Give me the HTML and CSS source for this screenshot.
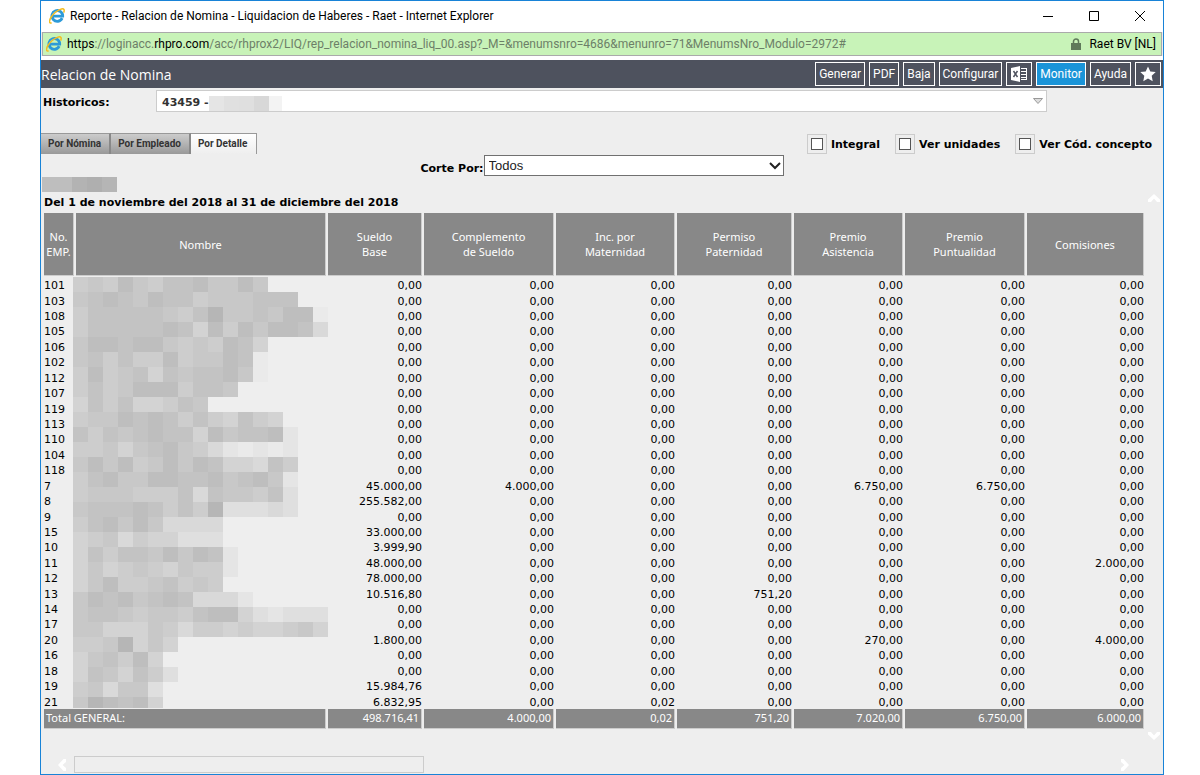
FILE: index.html
```html
<!DOCTYPE html>
<html lang="es">
<head>
<meta charset="utf-8">
<title>Reporte - Relacion de Nomina</title>
<link rel="stylesheet" href="styles.css">
</head>
<body>
<svg width="0" height="0" class="symbols" aria-hidden="true">
  <symbol id="ie" viewBox="0 0 16 16">
    <path d="M13.200 10.200A5.400 5.400 0 1 1 13.700 8.200H4.400" fill="none" stroke="#2c9ad8" stroke-width="2.800"/>
    <path d="M3.400 7.100a4.800 4.800 0 0 1 4.600-3.500" fill="none" stroke="#8ad6f7" stroke-width="1"/>
    <path d="M2.600 14.800C.2 15.800-.2 13 1.900 9.500 4.200 5.600 9 1.700 12.500.9c2.700-.6 3.300 1.200 2.100 3.700" fill="none" stroke="#f3bd22" stroke-width="1.500"/>
  </symbol>
  <symbol id="chevron" viewBox="0 0 12 8"><path d="M0 0h3l3 3.500L9 0h3v2.500L6 8 0 2.500z" fill="#fff"/></symbol>
</svg>
<div class="window">
  <header class="titlebar">
    <svg class="ie"><use href="#ie"/></svg>
    <span class="caption">Reporte - Relacion de Nomina - Liquidacion de Haberes - Raet - Internet Explorer</span>
    <button class="winbtn" aria-label="Minimizar"><svg width="10" height="10"><path d="M0 5.500h10" stroke="#000"/></svg></button>
    <button class="winbtn" aria-label="Maximizar"><svg width="10" height="10"><path d="M.5.5h9v9h-9z" stroke="#000" fill="none"/></svg></button>
    <button class="winbtn" aria-label="Cerrar"><svg width="10" height="10"><path d="M0 0l10 10M10 0L0 10" stroke="#000"/></svg></button>
  </header>
  <div class="address">
    <svg class="ie"><use href="#ie"/></svg>
    <span class="url"><b>https</b>://loginacc.<b>rhpro.com</b>/acc/rhprox2/LIQ/rep_relacion_nomina_liq_00.asp?_M=&amp;menumsnro=4686&amp;menunro=71&amp;MenumsNro_Modulo=2972#</span>
    <svg width="10" height="12"><path d="M0 5h10v7H0z" fill="#5f7a5a"/><path d="M2.500 5.500V3.500a2.500 2.500 0 0 1 5 0v2" fill="none" stroke="#5f7a5a" stroke-width="1.500"/></svg>
    <span class="owner">Raet BV [NL]</span>
  </div>
  <nav class="toolbar">
    <h1>Relacion de Nomina</h1>
    <button>Generar</button>
    <button>PDF</button>
    <button>Baja</button>
    <button>Configurar</button>
    <button class="icon" aria-label="Excel"><svg width="16" height="16"><path d="M0 2l9-2v16l-9-2z" fill="#fff"/><path d="M2.500 5l4 6M6.500 5l-4 6" stroke="#4e525e" stroke-width="1.500"/><path d="M10 2.500h6M10 5.500h6M10 8.500h6M10 11.500h6M10 13.500h6M15.500 2v12" stroke="#fff" fill="none"/></svg></button>
    <button class="active">Monitor</button>
    <button>Ayuda</button>
    <button class="icon" aria-label="Favorito"><svg width="16" height="16" viewBox="0 0 16 16"><path d="M8 .5l2.300 4.900 5.400.7-4 3.700 1 5.400L8 12.600l-4.700 2.600 1-5.400-4-3.700 5.400-.7z" fill="#fff"/></svg></button>
  </nav>
  <div class="history">
    <label for="hist">Historicos:</label>
    <button id="hist" class="combo"><span>43459 -</span><svg class="mask" width="73" height="15"><path d="M0 0h15v15H0z" fill="#e5e5e5"/><path d="M15 0h15v15H15z" fill="#e0e0e0"/><path d="M30 0h15v15H30z" fill="#dfdfdf"/><path d="M45 0h15v15H45z" fill="#d8d8d8"/><path d="M60 0h13v15H60z" fill="#f3f3f3"/></svg><svg class="arrow" width="10" height="6"><path d="M.5.5h9L5 5.500z" fill="#ddd" stroke="#999"/></svg></button>
  </div>
  <div class="options">
    <div class="tabs" role="tablist">
      <button role="tab">Por Nómina</button><button role="tab">Por Empleado</button><button role="tab" class="on" aria-selected="true">Por Detalle</button>
    </div>
    <div class="checks">
      <label><span class="box"><input type="checkbox"></span>Integral</label>
      <label><span class="box"><input type="checkbox"></span>Ver unidades</label>
      <label><span class="box"><input type="checkbox"></span>Ver Cód. concepto</label>
    </div>
  </div>
  <div class="cut">
    <label for="corte">Corte Por:</label>
    <div class="pick"><select id="corte"><option>Todos</option></select><svg width="12" height="8"><path d="M1 1l5 5 5-5" fill="none" stroke="#222" stroke-width="2"/></svg></div>
  </div>
  <main class="report">
    <div class="sheet">
      <svg class="company" width="75" height="15"><path d="M0 0h30v15H0z" fill="#bebebe"/><path d="M30 0h15v15H30z" fill="#b3b3b3"/><path d="M45 0h15v15H45z" fill="#afafaf"/><path d="M60 0h15v15H60z" fill="#b5b5b5"/></svg>
      <h2>Del 1 de noviembre del 2018 al 31 de diciembre del 2018</h2>
      <table>
        <colgroup><col class="c-num"><col class="c-name"><col class="c-base"><col class="c-comp"><col class="c-inc"><col class="c-perm"><col class="c-asis"><col class="c-punt"><col class="c-comi"></colgroup>
        <thead><tr><th>No.<br>EMP.</th><th>Nombre</th><th>Sueldo<br>Base</th><th>Complemento<br>de Sueldo</th><th>Inc. por<br>Maternidad</th><th>Permiso<br>Paternidad</th><th>Premio<br>Asistencia</th><th>Premio<br>Puntualidad</th><th>Comisiones</th></tr></thead>
        <tbody id="rows"></tbody>
        <tfoot><tr><th colspan="2">Total GENERAL:</th><td>498.716,41</td><td>4.000,00</td><td>0,02</td><td>751,20</td><td>7.020,00</td><td>6.750,00</td><td>6.000,00</td></tr></tfoot>
      </table>
    </div>
    <div class="rail">
      <button class="up" aria-label="Subir"><svg width="12" height="8"><use href="#chevron"/></svg></button>
      <button aria-label="Bajar"><svg width="12" height="8"><use href="#chevron"/></svg></button>
    </div>
  </main>
  <div class="hscroll">
    <button class="left" aria-label="Izquierda"><svg width="12" height="8"><use href="#chevron"/></svg></button>
    <div class="thumb"></div>
    <button class="right" aria-label="Derecha"><svg width="12" height="8"><use href="#chevron"/></svg></button>
  </div>
</div>
<script src="report.js"></script>
</body>
</html>
```
FILE: styles.css
```css
* { box-sizing: border-box; }
body {
  margin: 0;
  padding: 0 36px 0 40px;
  background: #fff;
  color: #000;
  font-family: "DejaVu Sans", sans-serif;
  font-size: 11px;
}
button { margin: 0; padding: 0; border: 0; background: none; font: inherit; color: inherit; }
svg { display: block; flex: none; }
h1, h2 { margin: 0; }
.symbols { position: absolute; }
.window {
  display: flex;
  flex-direction: column;
  min-height: 100vh;
  border: 1px solid #1883d7;
  background: #eee;
}
.titlebar, .address { font-family: Roboto, sans-serif; font-size: 12px; }
.titlebar { display: flex; align-items: center; height: 31px; padding: 0 0 2px 8px; background: #fff; }
.ie { width: 16px; height: 16px; margin-right: 5px; }
.caption { flex: 1; white-space: nowrap; }
.winbtn { width: 46px; height: 29px; display: flex; align-items: center; justify-content: center; }
.address {
  display: flex;
  align-items: center;
  height: 24px;
  margin: 0 1px;
  padding: 0 5px 0 3px;
  background: #c8f3b8;
  border: 1px solid #aaa;
}
.url { flex: 1; color: #6d7f68; white-space: nowrap; }
.url b { font-weight: 400; color: #000; }
.owner { margin-left: 8px; }
.toolbar {
  display: flex;
  align-items: center;
  gap: 4px;
  height: 32px;
  padding: 0 2px 0 0;
  border-top: 4px solid #fff;
  background: #4e525e;
  color: #fff;
}
.toolbar h1 { flex: 1; font: 400 14px "Open Sans", sans-serif; }
.toolbar button { height: 24px; padding: 0 3px; border: 1px solid #fff; font: 12px Roboto, sans-serif; }
.toolbar .icon { width: 26px; padding: 0 4px; }
.toolbar .active { background: #1a94d8; }
.history { display: grid; grid-template-columns: 113px minmax(0, 891fr) 116fr; align-items: center; padding: 2px 0 0 2px; font-weight: 700; }
.history label { padding-top: 3px; }
.combo { display: flex; align-items: center; height: 22px; padding: 0 3px 0 5px; border: 1px solid #ccc; background: #fff; color: #333; }
.combo span { padding-top: 3px; }
.combo .mask { margin-top: 4px; }
.combo .arrow { margin-left: auto; }
.options { display: flex; justify-content: space-between; margin-top: 21px; height: 22px; }
.tabs { display: flex; font-family: Roboto, sans-serif; font-size: 10px; font-weight: 700; color: #333; }
.tabs button { height: 21px; padding: 0 8px 1px 7px; border-top: 1px solid #999; border-right: 2px solid #888; background: linear-gradient(#ccc, #999); }
.tabs .on { padding-right: 9px; border-right: 1px solid #999; background: linear-gradient(#fff, #eee); }
.checks { display: flex; gap: 15px; padding: 1px 11px 0 0; font-weight: 700; }
.checks label { display: flex; align-items: center; gap: 4px; height: 20px; }
.box { width: 20px; height: 20px; border: 1px solid #ccc; display: grid; place-items: center; }
.box input { appearance: none; width: 12px; height: 12px; margin: 0; border: 1px solid #555; background: #fff; }
.cut { display: flex; justify-content: center; align-items: center; font-weight: 700; height: 21px; }
.cut label { padding-top: 5px; }
.pick { display: grid; align-items: center; width: 300px; }
.pick > * { grid-area: 1 / 1; }
.pick svg { justify-self: end; margin-right: 3px; pointer-events: none; }
select { appearance: none; width: 100%; height: 21px; padding: 0 4px; border: 1px solid #707070; border-radius: 0; background: #fff; color: #222; font: 13px "Liberation Sans", sans-serif; }
.report { display: flex; flex: 1; }
.sheet { flex: 1; min-width: 0; padding: 1px 0 0 1px; }
.sheet h2 { padding: 4px 0 0 2px; font-size: 11px; line-height: 13px; font-weight: 700; margin-bottom: 3px; }
table { width: 100%; table-layout: fixed; border-collapse: separate; border-spacing: 2px 1px; }
.c-num { width: 30px; }
.c-name { width: 250px; }
.c-base { width: 94px; }
.c-comp { width: 130px; }
.c-inc { width: 119px; }
.c-perm { width: 115px; }
.c-asis { width: 109px; }
.c-punt { width: 120px; }
.c-comi { width: 117px; }
td, th { padding: 0; line-height: 14px; text-align: right; white-space: nowrap; }
thead th, tfoot th, tfoot td { background: #888; color: #fff; border: solid #ccc; border-width: 0 1px 1px 0; font-family: "Noto Sans", sans-serif; font-size: 11px; font-weight: 400; }
thead th { height: 63px; line-height: 15px; text-align: center; }
tfoot th, tfoot td { height: 20px; padding: 0 2px 1px; }
tbody th, tbody td { padding-top: 4px; line-height: 10px; }
tbody th, tfoot th { text-align: left; font-weight: 400; }
tbody .names { padding: 0; vertical-align: top; }
.names svg { margin-left: -3px; }
.rail { display: flex; flex-direction: column; justify-content: space-between; width: 18px; padding: 17px 3px 3px 3px; }
.rail button, .hscroll button { display: flex; align-items: center; justify-content: center; width: 12px; height: 10px; }
.up svg { transform: rotate(180deg); }
.left svg { transform: rotate(90deg); }
.right svg { transform: rotate(-90deg); }
.hscroll { display: flex; align-items: center; margin-top: 12px; height: 18px; padding: 0 32px 1px 15px; }
.thumb { width: 350px; height: 17px; margin-left: 6px; margin-right: auto; border: 1px solid #ccc; }
```
FILE: report.js
```js
const numbers = [101, 103, 108, 105, 106, 102, 112, 107, 119, 113, 110, 104, 118, 7, 8, 9, 15, 10, 11, 12, 13, 14, 17, 20, 16, 18, 19, 21];

// Amounts that differ from zero, by employee number and column.
const amounts = {
  7: { 0: "45.000,00", 1: "4.000,00", 4: "6.750,00", 5: "6.750,00" },
  8: { 0: "255.582,00" },
  15: { 0: "33.000,00" },
  10: { 0: "3.999,90" },
  11: { 0: "48.000,00", 6: "2.000,00" },
  12: { 0: "78.000,00" },
  13: { 0: "10.516,80", 3: "751,20" },
  20: { 0: "1.800,00", 4: "270,00", 6: "4.000,00" },
  19: { 0: "15.984,76" },
  21: { 0: "6.832,95", 2: "0,02" }
};

// Redacted names: one digit per block, from dark to light.
const shades = ["#b6b6b6", "#bebebe", "#c3c3c3", "#c8c8c8", "#cdcdcd", "#d3d3d3", "#d9d9d9", "#dfdfdf", "#e5e5e5", "#eaeaea"];
const mask = [
  "4341342213313", "321231224333222", "42222234203323119", "42222212514131126",
  "3112113434125", "3242441433129", "4143252322139", "42431114223", "524255423",
  "43312124245245", "242321225132218", "443532134689898", "313143131255624",
  "421331122132138", "433344426233427", "322212424077767", "4213136666",
  "5436455777", "52422313128", "53543453448", "5314432434", "312132126668",
  "32234334211578777", "33555346445455435", "4430535", "532415", "5235247",
  "436337", "301215"
];

const blocks = mask.map((line, r) => [...line].map((d, c) =>
  `<rect x="${c * 15}" y="${r * 15}" width="15" height="15" fill="${shades[d]}"/>`).join("")).join("");
const names = `<td class="names" rowspan="${numbers.length}"><svg width="255" height="431" shape-rendering="crispEdges">${blocks}</svg></td>`;

document.getElementById("rows").innerHTML = numbers.map((n, i) => {
  const cells = [0, 1, 2, 3, 4, 5, 6].map(c => `<td>${(amounts[n] || {})[c] || "0,00"}</td>`).join("");
  return `<tr><th scope="row">${n}</th>${i === 0 ? names : ""}${cells}</tr>`;
}).join("");
```
